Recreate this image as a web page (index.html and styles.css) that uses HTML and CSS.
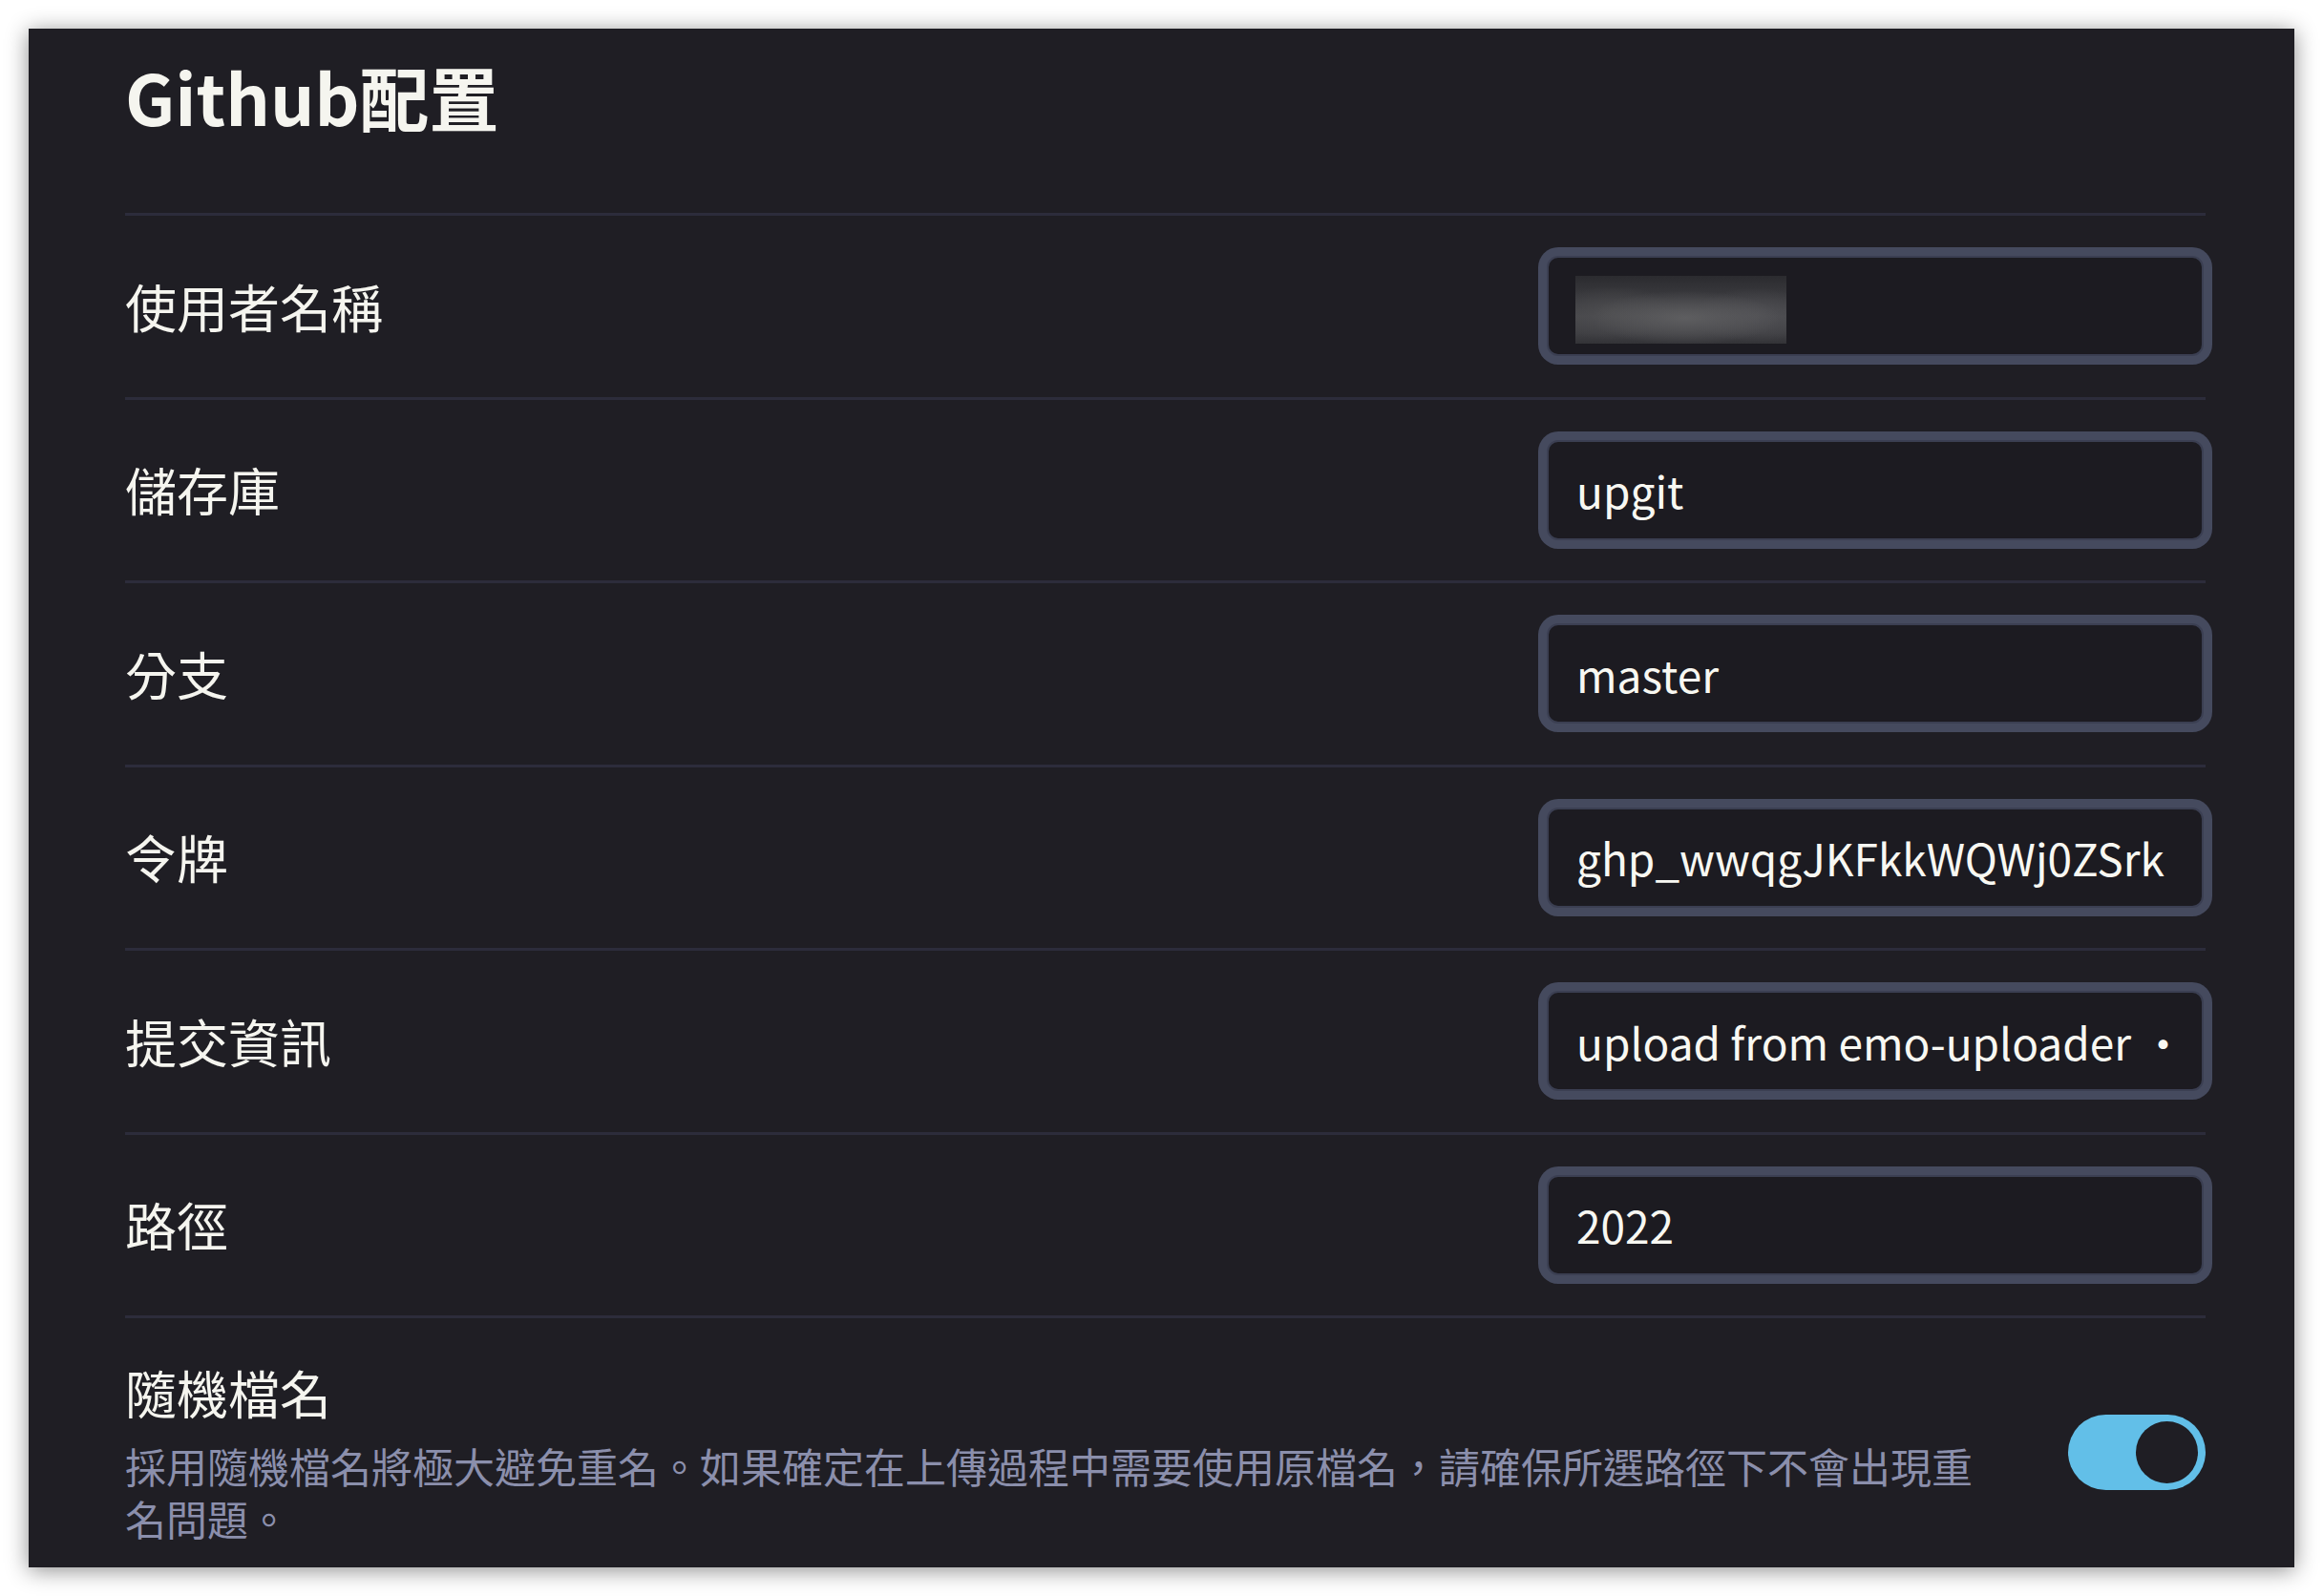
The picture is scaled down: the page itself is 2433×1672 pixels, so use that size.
FILE: index.html
```html
<!DOCTYPE html>
<html lang="zh-Hant">
<head>
<meta charset="utf-8">
<title>Github配置</title>
<link rel="stylesheet" href="styles.css">
</head>
<body>
<div class="panel">
  <h1 class="title">Github配置</h1>
  <div class="row">
    <span class="label">使用者名稱</span>
    <div class="field field-blur"><span class="blur"></span></div>
  </div>
  <div class="row">
    <span class="label">儲存庫</span>
    <input class="field" type="text" value="upgit">
  </div>
  <div class="row">
    <span class="label">分支</span>
    <input class="field" type="text" value="master">
  </div>
  <div class="row">
    <span class="label">令牌</span>
    <input class="field" type="text" value="ghp_wwqgJKFkkWQWj0ZSrk">
  </div>
  <div class="row">
    <span class="label">提交資訊</span>
    <input class="field" type="text" value="upload from emo-uploader •">
  </div>
  <div class="row">
    <span class="label">路徑</span>
    <input class="field" type="text" value="2022">
  </div>
  <div class="row row-toggle">
    <div class="text">
      <div class="label">隨機檔名</div>
      <p class="desc">採用隨機檔名將極大避免重名。如果確定在上傳過程中需要使用原檔名，請確保所選路徑下不會出現重名問題。</p>
    </div>
    <span class="toggle"><span class="knob"></span></span>
  </div>
</div>
</body>
</html>
```

FILE: styles.css
```css
html, body {
  margin: 0;
}

body {
  padding: 30px;
  background: #ffffff;
  font-family: "Noto Sans CJK TC", "Noto Sans", sans-serif;
}

.panel {
  height: 1612px;
  box-sizing: border-box;
  padding: 32px 93px 0 101px;
  background: #1f1e24;
  overflow: hidden;
  box-shadow: 0 3px 22px rgba(0, 0, 0, 0.45);
}

.title {
  margin: 0 0 85px;
  font-size: 73px;
  line-height: 76px;
  font-weight: 700;
  color: #f5f5ef;
}

.row {
  display: flex;
  align-items: center;
  justify-content: space-between;
  box-sizing: border-box;
  height: 192.5px;
  border-top: 3px solid #2c2c3b;
}

.label {
  font-size: 54px;
  line-height: 70px;
  color: #f5f5ef;
}

.field {
  box-sizing: border-box;
  width: 688px;
  height: 105px;
  margin: 0 2px 0 0;
  padding: 0 30px 0 29px;
  border: 2px solid #3b3f52;
  border-radius: 12px;
  box-shadow: 0 0 0 9px #454a5e;
  background: #1c1b21;
  color: #f8f8f2;
  font-family: "Noto Sans CJK TC", "Noto Sans", sans-serif;
  font-size: 46px;
  outline: none;
}

.field-blur {
  display: flex;
  align-items: flex-start;
  padding: 19px 0 0 28px;
}

.blur {
  display: block;
  width: 221px;
  height: 71px;
  background:
    radial-gradient(ellipse 45% 40% at 52% 62%, rgba(96, 96, 98, 0.9), rgba(96, 96, 98, 0) 100%),
    radial-gradient(ellipse 30% 40% at 18% 55%, rgba(80, 80, 82, 0.7), rgba(80, 80, 82, 0) 100%),
    radial-gradient(ellipse 30% 40% at 85% 58%, rgba(82, 82, 86, 0.8), rgba(82, 82, 86, 0) 100%),
    linear-gradient(180deg, #2b2b2f 0%, #3c3c40 35%, #48484c 60%, #3f3f43 85%, #333337 100%);
}

.row-toggle {
  height: auto;
  padding: 43px 0 40px;
}

.text {
  flex: 1;
  margin-right: 80px;
}

.desc {
  margin: 14px 0 0;
  font-size: 43px;
  line-height: 55px;
  color: #8b8fac;
}

.toggle {
  position: relative;
  flex: none;
  width: 144px;
  height: 79px;
  border-radius: 40px;
  background: #62bfe8;
}

.knob {
  position: absolute;
  top: 7px;
  right: 8px;
  width: 65px;
  height: 65px;
  border-radius: 50%;
  background: #1f1e24;
}
```
